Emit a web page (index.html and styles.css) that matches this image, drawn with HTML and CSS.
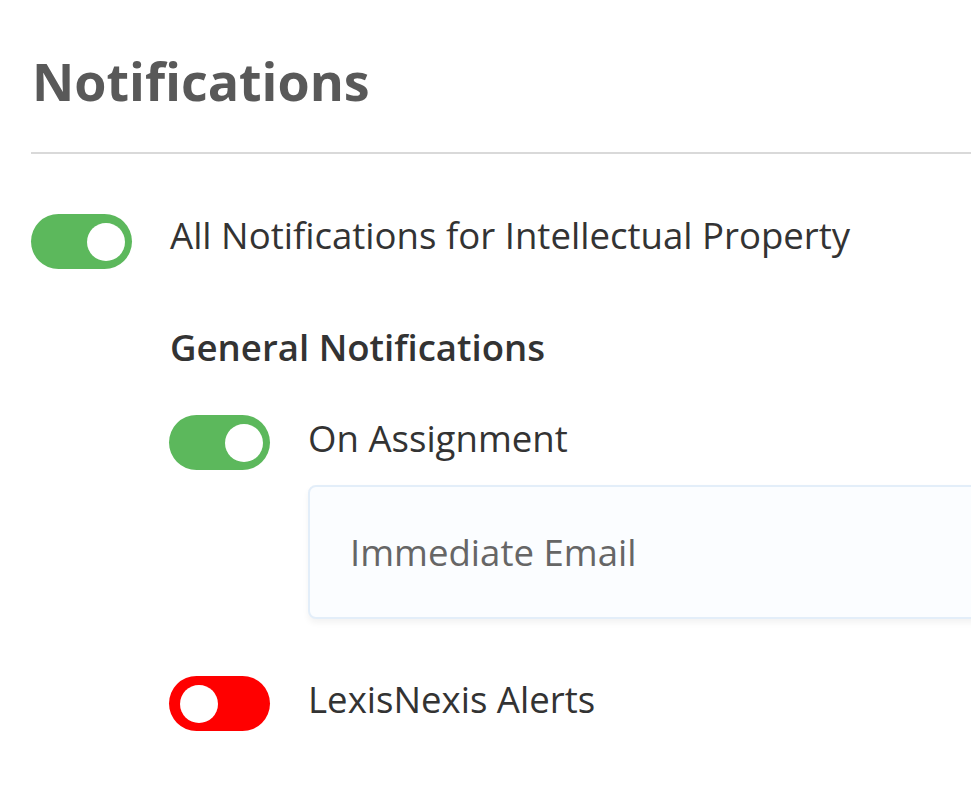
FILE: index.html
```html
<!DOCTYPE html>
<html lang="en">
<head>
<meta charset="utf-8">
<title>Notifications</title>
<link rel="stylesheet" href="styles.css">
</head>
<body>
<main class="page">
  <h1 class="title">Notifications</h1>
  <hr class="divider">
  <div class="row row-main">
    <span class="toggle on"><span class="knob"></span></span>
    <span class="label">All Notifications for Intellectual Property</span>
  </div>
  <section class="group">
    <h2 class="group-title">General Notifications</h2>
    <div class="row row-assign">
      <span class="toggle on"><span class="knob"></span></span>
      <span class="label">On Assignment</span>
    </div>
    <div class="card">Immediate Email</div>
    <div class="row row-lexis">
      <span class="toggle off"><span class="knob"></span></span>
      <span class="label">LexisNexis Alerts</span>
    </div>
  </section>
</main>
</body>
</html>
```

FILE: styles.css
```css
html, body {
  margin: 0;
  padding: 0;
  background: #ffffff;
  overflow: hidden;
}
body {
  font-family: "Open Sans", "Noto Sans", sans-serif;
  color: #333333;
}
.page {
  padding: 43px 0 0 31px;
}
.title {
  margin: 0 0 0 1px;
  font-size: 52px;
  line-height: 76px;
  font-weight: 700;
  color: #595959;
}
.divider {
  margin: 33px 0 0 0;
  border: 0;
  height: 2px;
  background: #d9d9d9;
}
.row {
  display: flex;
  align-items: flex-start;
  gap: 38px;
}
.row-main {
  margin-top: 60px;
}
.toggle {
  flex: none;
  width: 101px;
  height: 55px;
  border-radius: 28px;
  display: flex;
  align-items: center;
  padding: 0 7px;
  box-sizing: border-box;
}
.toggle.on {
  background: #5cb85c;
  justify-content: flex-end;
}
.toggle.off {
  background: #ff0000;
  justify-content: flex-start;
  padding-left: 11px;
}
.knob {
  width: 38px;
  height: 38px;
  border-radius: 50%;
  background: #ffffff;
}
.label {
  font-size: 36.6px;
  line-height: 42px;
  color: #333333;
  white-space: nowrap;
}
.row-assign .label,
.row-lexis .label {
  line-height: 46px;
}
.group {
  margin-left: 138px;
}
.group-title {
  margin: 55px 0 0 1px;
  font-size: 36.6px;
  line-height: 46px;
  font-weight: 600;
  color: #333333;
}
.row-assign {
  margin-top: 45px;
}
.card {
  margin: 15px 0 0 139px;
  width: 760px;
  height: 134px;
  box-sizing: border-box;
  border: 2px solid #e3eef9;
  border-radius: 8px;
  background: #fbfdff;
  box-shadow: 0 4px 6px rgba(0, 0, 0, 0.05);
  padding: 42px 0 0 40px;
  font-size: 36.6px;
  line-height: 46px;
  color: #666666;
  white-space: nowrap;
}
.row-lexis {
  margin-top: 57px;
}
```
